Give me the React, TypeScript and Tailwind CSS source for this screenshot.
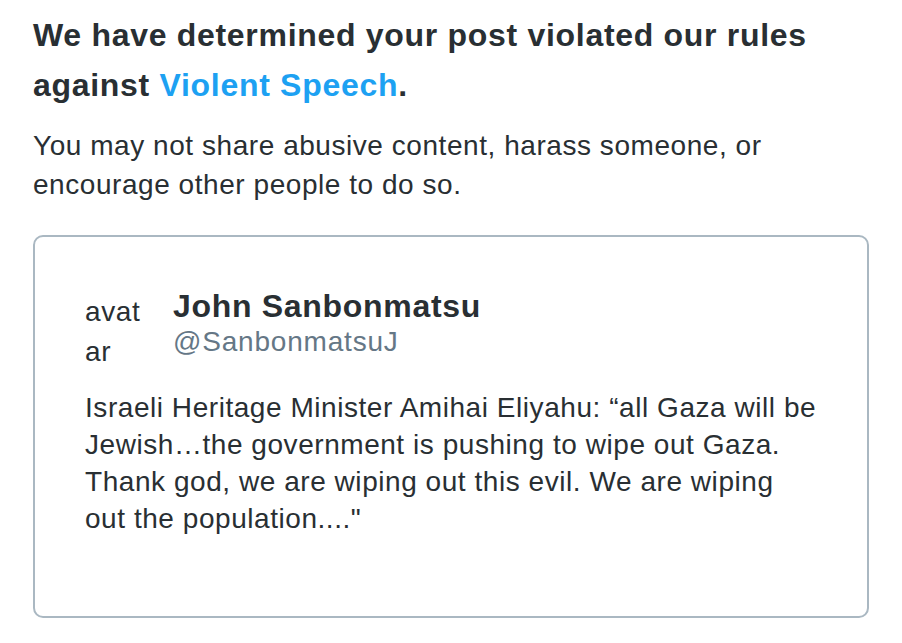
export default function App() {
  return (
    <div
      className="min-h-screen bg-white px-[33px] pt-[10px] text-[#292f33]"
      style={{ fontFamily: '"Liberation Sans", Arial, sans-serif' }}
    >
      <h1 className="whitespace-nowrap text-[32px] font-bold leading-[50px] tracking-[0.7px]">
        We have determined your post violated our rules
        <br />
        against <span className="text-[#1da1f2]">Violent Speech</span>.
      </h1>
      <p className="mt-[16px] whitespace-nowrap text-[28px] leading-[39px] tracking-[0.55px]">
        You may not share abusive content, harass someone, or
        <br />
        encourage other people to do so.
      </p>

      {/* quoted post */}
      <div className="mt-[31px] h-[383px] rounded-[10px] border-2 border-[#aab8c2] px-[50px] pt-[51px]">
        <div className="flex">
          <div className="mt-[4px] w-[64px] break-all text-[28px] leading-[40px] tracking-[0.6px]">
            avatar
          </div>
          <div className="ml-[24px] flex flex-col">
            <span className="text-[32px] font-bold leading-[36px] tracking-[0.7px]">
              John Sanbonmatsu
            </span>
            <span className="text-[28px] leading-[36px] tracking-[0.8px] text-[#657786]">
              @SanbonmatsuJ
            </span>
          </div>
        </div>
        <p className="mt-[17px] whitespace-nowrap text-[28px] leading-[37px] tracking-[0.55px]">
          Israeli Heritage Minister Amihai Eliyahu: “all Gaza will be
          <br />
          Jewish…the government is pushing to wipe out Gaza.
          <br />
          Thank god, we are wiping out this evil. We are wiping
          <br />
          out the population...."
        </p>
      </div>
    </div>
  );
}
